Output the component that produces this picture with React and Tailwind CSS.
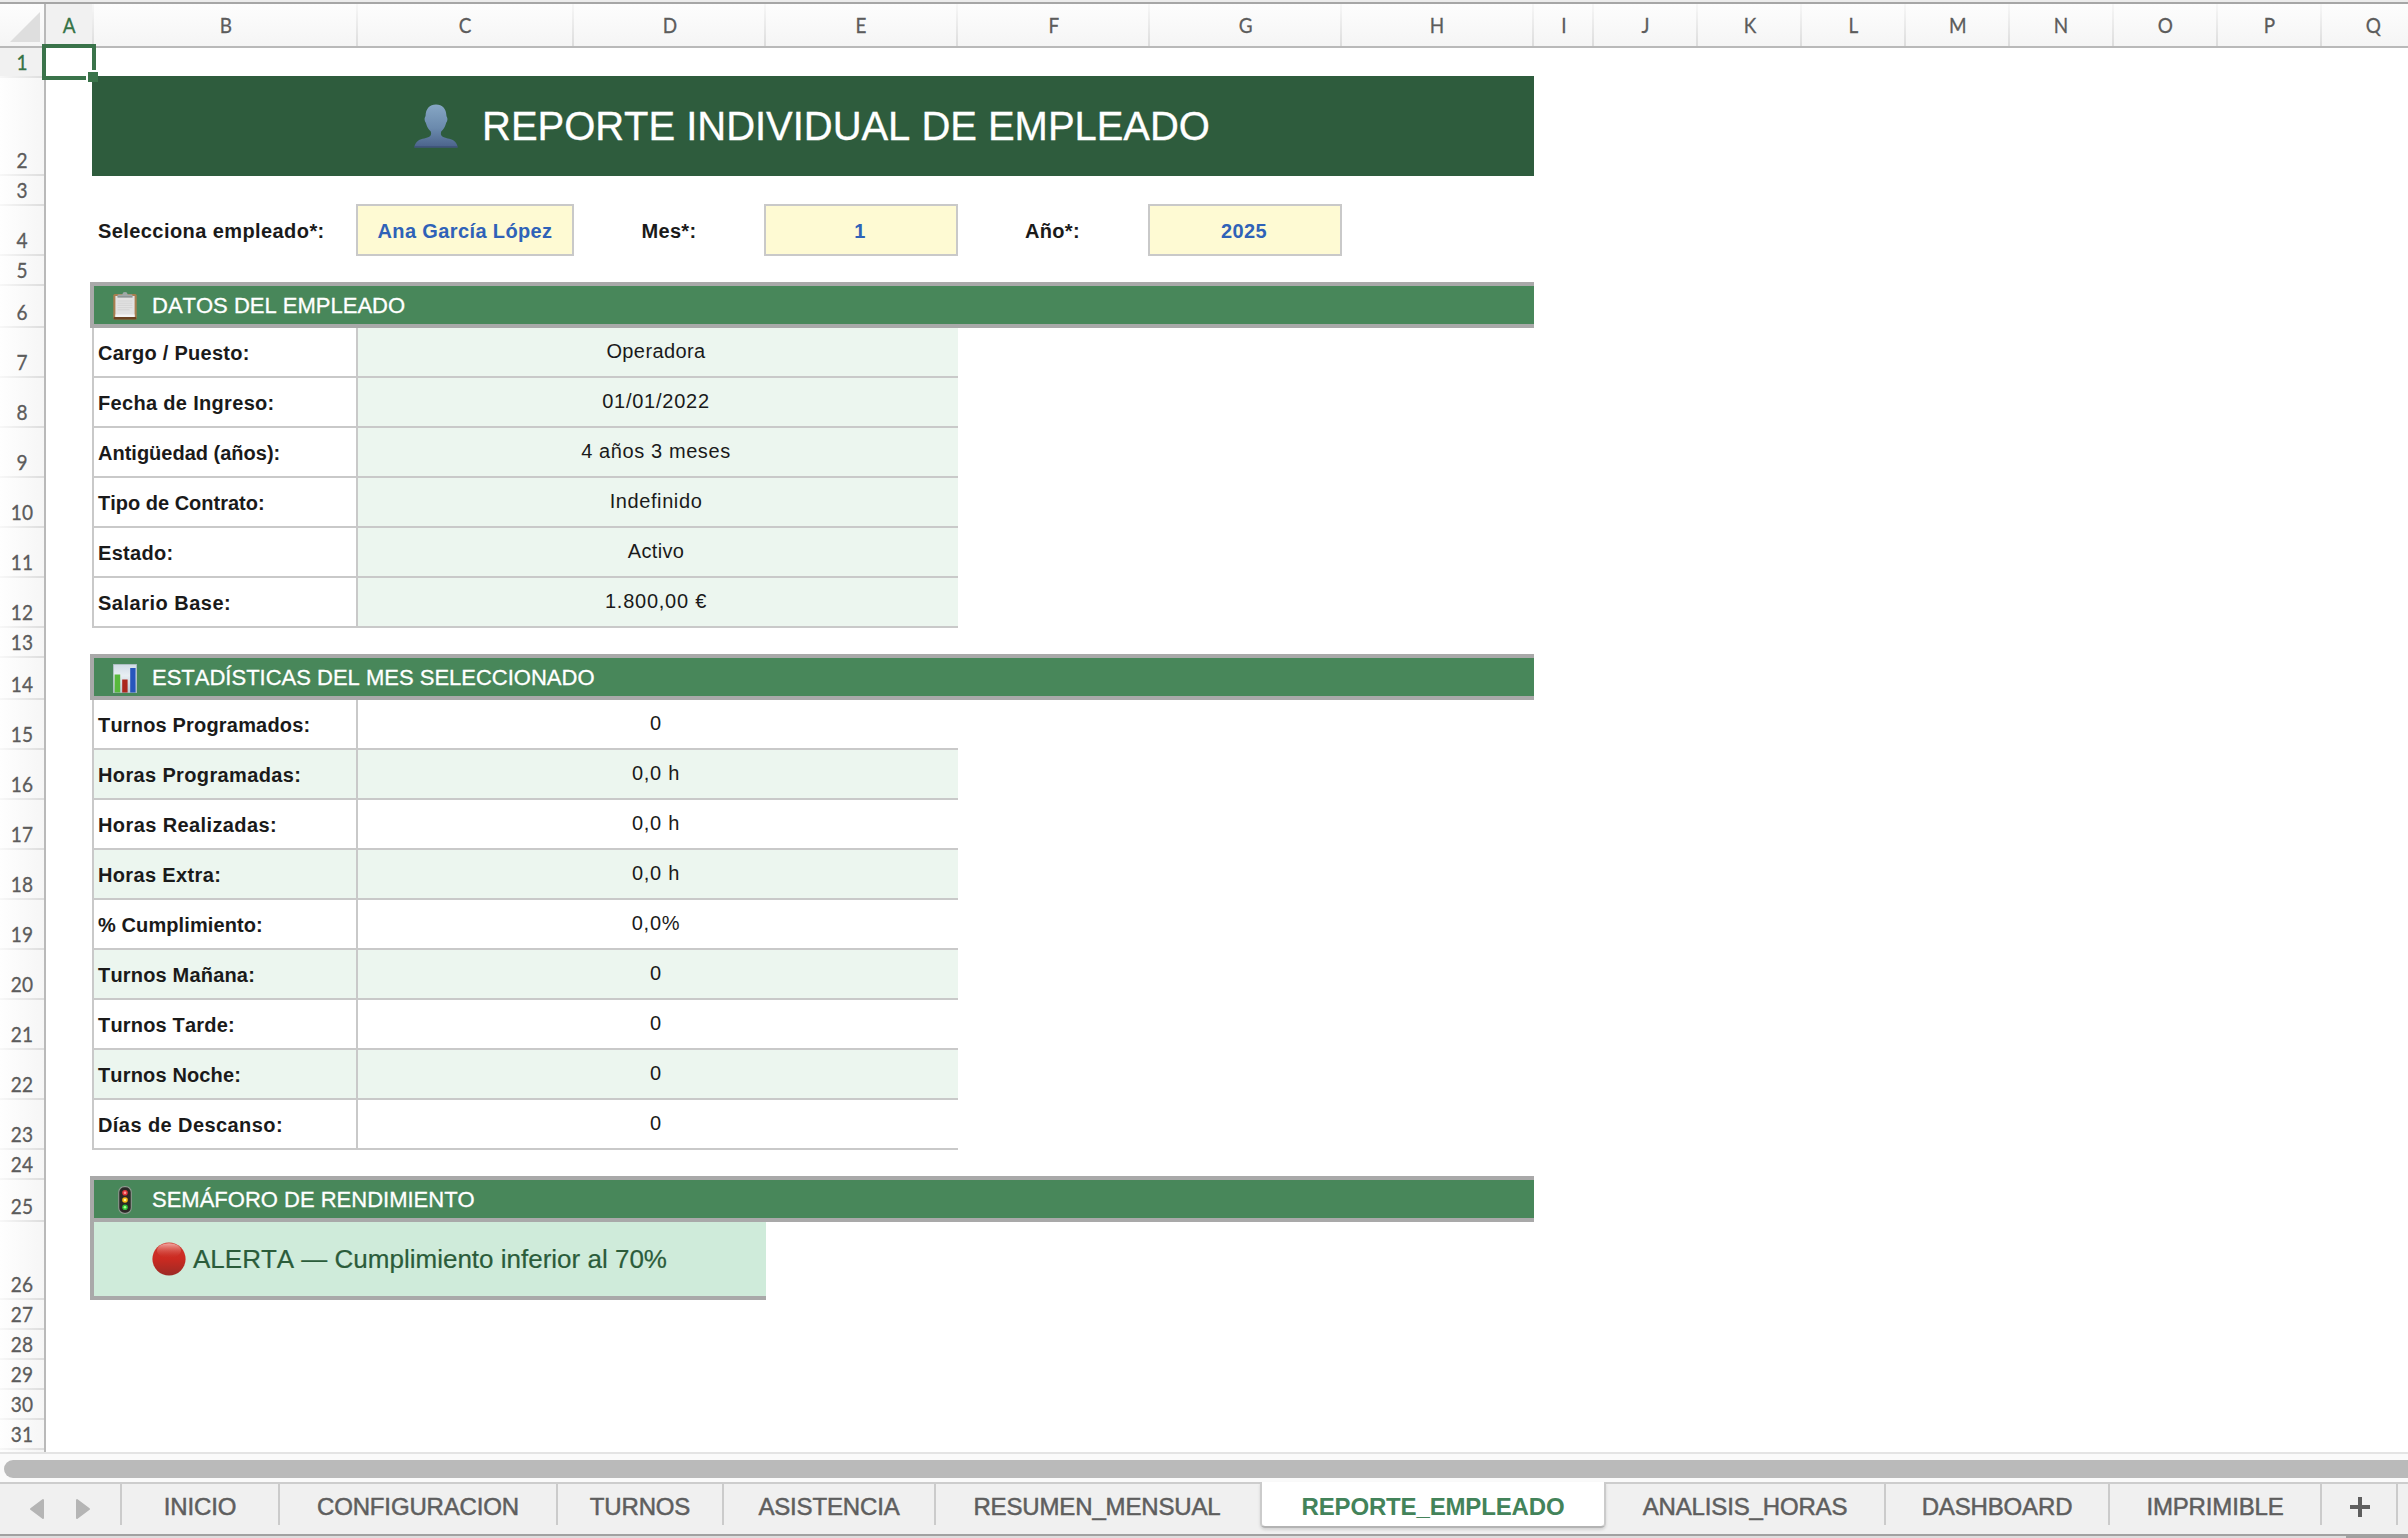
import React from "react";
import clsx from "clsx";

const columns = [
  { name: "A", width: "w-[48px]" },
  { name: "B", width: "w-[264px]" },
  { name: "C", width: "w-[216px]" },
  { name: "D", width: "w-[192px]" },
  { name: "E", width: "w-[192px]" },
  { name: "F", width: "w-[192px]" },
  { name: "G", width: "w-[192px]" },
  { name: "H", width: "w-[192px]" },
  { name: "I", width: "w-[60px]" },
  { name: "J", width: "w-[104px]" },
  { name: "K", width: "w-[104px]" },
  { name: "L", width: "w-[104px]" },
  { name: "M", width: "w-[104px]" },
  { name: "N", width: "w-[104px]" },
  { name: "O", width: "w-[104px]" },
  { name: "P", width: "w-[104px]" },
  { name: "Q", width: "w-[104px]" },
];

// alto de cada fila, 1 a 31
const rowHeights = [
  "h-[30px]", "h-[98px]", "h-[30px]", "h-[50px]", "h-[30px]", "h-[42px]",
  "h-[50px]", "h-[50px]", "h-[50px]", "h-[50px]", "h-[50px]", "h-[50px]",
  "h-[30px]", "h-[42px]",
  "h-[50px]", "h-[50px]", "h-[50px]", "h-[50px]", "h-[50px]", "h-[50px]", "h-[50px]", "h-[50px]", "h-[50px]",
  "h-[30px]", "h-[42px]", "h-[78px]",
  "h-[30px]", "h-[30px]", "h-[30px]", "h-[30px]", "h-[30px]",
];

const employee = [
  { label: "Cargo / Puesto:", value: "Operadora", lt: "tracking-[0.25px]", vt: "tracking-[0.4px]" },
  { label: "Fecha de Ingreso:", value: "01/01/2022", lt: "tracking-[0.32px]", vt: "tracking-[0.75px]" },
  { label: "Antigüedad (años):", value: "4 años 3 meses", lt: "tracking-[0px]", vt: "tracking-[0.6px]" },
  { label: "Tipo de Contrato:", value: "Indefinido", lt: "tracking-[0px]", vt: "tracking-[0.6px]" },
  { label: "Estado:", value: "Activo", lt: "tracking-[0.3px]", vt: "tracking-[0.3px]" },
  { label: "Salario Base:", value: "1.800,00 €", lt: "tracking-[0.5px]", vt: "tracking-[0.75px]" },
];

const stats = [
  { label: "Turnos Programados:", value: "0", lt: "tracking-[0.18px]" },
  { label: "Horas Programadas:", value: "0,0 h", lt: "tracking-[0.36px]" },
  { label: "Horas Realizadas:", value: "0,0 h", lt: "tracking-[0.4px]" },
  { label: "Horas Extra:", value: "0,0 h", lt: "tracking-[0.35px]" },
  { label: "% Cumplimiento:", value: "0,0%", lt: "tracking-[0.1px]" },
  { label: "Turnos Mañana:", value: "0", lt: "tracking-[0.18px]" },
  { label: "Turnos Tarde:", value: "0", lt: "tracking-[0.18px]" },
  { label: "Turnos Noche:", value: "0", lt: "tracking-[0.15px]" },
  { label: "Días de Descanso:", value: "0", lt: "tracking-[0.42px]" },
];

const tabs = [
  { name: "INICIO", width: "w-[158px]" },
  { name: "CONFIGURACION", width: "w-[278px]" },
  { name: "TURNOS", width: "w-[166px]" },
  { name: "ASISTENCIA", width: "w-[212px]" },
  { name: "RESUMEN_MENSUAL", width: "w-[324px]" },
  { name: "REPORTE_EMPLEADO", width: "w-[346px]", active: true },
  { name: "ANALISIS_HORAS", width: "w-[280px]" },
  { name: "DASHBOARD", width: "w-[224px]" },
  { name: "IMPRIMIBLE", width: "w-[212px]" },
];

function PersonIcon() {
  return (
    <svg className="w-[44px] h-[44px] shrink-0" viewBox="0 0 44 44">
      <defs>
        <linearGradient id="person" x1="0" y1="0" x2="0" y2="1">
          <stop offset="0" stopColor="#86a6c4" />
          <stop offset="0.55" stopColor="#6b8aad" />
          <stop offset="1" stopColor="#4a628a" />
        </linearGradient>
      </defs>
      <path
        fill="url(#person)"
        d="M22 0.5C28.5 0.5 32.3 5 32.4 11.5C32.5 12.9 33.6 13.4 33.4 15.6C33.2 17.8 32.2 18.4 31.8 20C31 23.4 29.2 25.6 27.2 27.4C26.6 29.3 26.8 31 28 32.2C31 34.6 36.4 34.2 39.6 36.4C42.2 38.2 43.4 40.6 43.6 43.5H0.4C0.6 40.6 1.8 38.2 4.4 36.4C7.6 34.2 13 34.6 16 32.2C17.2 31 17.4 29.3 16.8 27.4C14.8 25.6 13 23.4 12.2 20C11.8 18.4 10.8 17.8 10.6 15.6C10.4 13.4 11.5 12.9 11.6 11.5C11.7 5 15.5 0.5 22 0.5Z"
      />
      <path d="M0.4 42.9H43.6" stroke="#3d5177" strokeWidth="1.2" />
    </svg>
  );
}

function ClipboardIcon() {
  return (
    <svg className="w-[24px] h-[28px] shrink-0" viewBox="0 0 24 28">
      <rect x="0.3" y="2" width="23.4" height="25.6" rx="1.6" fill="#a87e4f" />
      <rect x="0.6" y="25" width="22.8" height="2.4" rx="1" fill="#6b4423" />
      <rect x="2.4" y="4" width="19.2" height="21" fill="#e2e2e2" />
      <path d="M2.4 22.5h19.2V25H2.4z" fill="#f4f4f4" />
      <path d="M4.6 9h14.8M4.6 11.2h14.8M4.6 13.4h14.8M4.6 15.6h14.8M4.6 17.8h12" stroke="#d3d3d3" strokeWidth="0.9" />
      <path d="M4.5 5.4V3.2Q4.5 2.4 5.5 2.4H9.3Q9.6 0 12 0T14.7 2.4H18.5Q19.5 2.4 19.5 3.2V5.4Z" fill="#9fa9a8" />
      <path d="M4.5 4.9h15" stroke="#7b8281" strokeWidth="0.8" />
    </svg>
  );
}

function ChartIcon() {
  return (
    <svg className="w-[24px] h-[29px] shrink-0" viewBox="0 0 24 29">
      <defs>
        <linearGradient id="chartBg" x1="0" y1="0" x2="0" y2="1">
          <stop offset="0" stopColor="#cfdbe5" />
          <stop offset="0.4" stopColor="#e8eef3" />
          <stop offset="1" stopColor="#b9c6d2" />
        </linearGradient>
      </defs>
      <rect width="24" height="29" fill="url(#chartBg)" />
      <rect x="0.4" y="0.4" width="23.2" height="28.2" fill="none" stroke="#a5b8bb" strokeWidth="0.8" />
      <rect x="1.6" y="10.5" width="5.6" height="18" fill="#58b83c" />
      <rect x="9.2" y="15.5" width="5.4" height="13" fill="#ab261d" />
      <rect x="17.2" y="4" width="5.4" height="24.5" fill="#2756bd" />
    </svg>
  );
}

function TrafficLightIcon() {
  return (
    <svg className="w-[24px] h-[28px] shrink-0" viewBox="0 0 24 28">
      <rect x="5.7" y="0.6" width="12.6" height="26.8" rx="5.6" fill="#2b2826" stroke="#8d9a8f" strokeWidth="1.1" />
      <circle cx="12" cy="6.8" r="2.8" fill="#e0343a" />
      <circle cx="12" cy="6.8" r="1.3" fill="#ff9c98" />
      <circle cx="12" cy="14" r="2.8" fill="#f2b90f" />
      <circle cx="12" cy="14" r="1.3" fill="#fff3a0" />
      <circle cx="12" cy="21.2" r="2.8" fill="#2fc236" />
      <circle cx="12" cy="21.2" r="1.3" fill="#a9ff8f" />
    </svg>
  );
}

function RedCircleIcon() {
  return (
    <svg className="w-[34px] h-[34px] shrink-0" viewBox="0 0 34 34">
      <defs>
        <linearGradient id="red" x1="0" y1="0" x2="0" y2="1">
          <stop offset="0" stopColor="#cf3a30" />
          <stop offset="0.5" stopColor="#cb2a21" />
          <stop offset="1" stopColor="#9c2a25" />
        </linearGradient>
        <linearGradient id="shine" x1="0" y1="0" x2="0" y2="1">
          <stop offset="0" stopColor="#f3aaa4" />
          <stop offset="1" stopColor="#cf3a30" stopOpacity="0" />
        </linearGradient>
      </defs>
      <circle cx="17" cy="17" r="16.6" fill="url(#red)" />
      <ellipse cx="17" cy="8.6" rx="12" ry="7.4" fill="url(#shine)" />
    </svg>
  );
}

function ColumnHeaders() {
  return (
    <div className="flex h-[44px] shrink-0 border-b-2 border-[#b9b9b9] bg-linear-to-b from-[#fdfdfd] to-[#f5f5f5] overflow-hidden">
      <div className="w-[46px] shrink-0 border-r-2 border-[#b9b9b9]">
        <svg className="w-[44px] h-[42px]" viewBox="0 0 44 42">
          <path d="M10 38L40 8V38Z" fill="#dedede" />
        </svg>
      </div>
      {columns.map((c) => (
        <div
          key={c.name}
          className={clsx(
            "flex shrink-0 items-center justify-center border-r-2 pl-px pb-0.5 font-['Lato',sans-serif] text-[21px] leading-none [-webkit-text-stroke:0.3px] [border-image:linear-gradient(to_bottom,#f8f8f8,#dcdcdc)_1]",
            c.width,
            c.name === "A" ? "bg-[#f1f1f1] text-[#367346]" : "text-[#5c5c5c]"
          )}
        >
          <span className="scale-x-90">{c.name}</span>
        </div>
      ))}
    </div>
  );
}

function RowHeaders() {
  return (
    <div className="w-[46px] shrink-0 border-r-2 border-[#b9b9b9] bg-linear-to-r from-[#fefefe] to-[#f6f6f6]">
      {rowHeights.map((h, i) => (
        <div
          key={i}
          className={clsx(
            "flex items-end justify-center border-b-2 pb-1 pr-px font-['Lato',sans-serif] text-[20.5px] leading-none [-webkit-text-stroke:0.3px] [border-image:linear-gradient(to_right,#f8f8f8,#dcdcdc)_1]",
            h,
            i === 0 ? "bg-[#f1f1f1] text-[#367346]" : "text-[#5c5c5c]"
          )}
        >
          <span className="scale-x-93">{i + 1}</span>
        </div>
      ))}
    </div>
  );
}

function SectionBar({ icon, title }) {
  return (
    <div className="mt-[26px] flex h-[46px] w-[1444px] items-center gap-[15px] border-y-4 border-l-4 border-[#a9a9a9] bg-[#48875a] pl-[19px] pt-0.5 text-[22px] leading-none text-white [-webkit-text-stroke:0.3px_white]">
      {icon}
      <span>{title}</span>
    </div>
  );
}

function DataRow({ row, labelShade, valueShade }) {
  return (
    <div className="ml-0.5 flex h-[50px] w-[866px] border-b-2 border-l-2 border-[#c9c9c9] text-[20px] leading-none">
      <div
        className={clsx(
          "flex w-[264px] items-center border-r-2 border-[#c9c9c9] pl-1 pt-0.5 font-bold text-[#1a1a1a]",
          labelShade && "bg-[#ecf6ef]",
          row.lt
        )}
      >
        {row.label}
      </div>
      <div
        className={clsx(
          "flex flex-1 items-center justify-center pb-0.5 pr-1 text-[#1a1a1a]",
          valueShade && "bg-[#ecf6ef]",
          row.vt ?? "tracking-[0.7px]"
        )}
      >
        {row.value}
      </div>
    </div>
  );
}

function Field({ width, children }) {
  return (
    <div
      className={clsx(
        "flex h-[52px] items-center justify-center border-2 border-[#c9c9c9] bg-[#fefad3] pt-0.5 tracking-[0.38px] text-[#2f62b8]",
        width
      )}
    >
      {children}
    </div>
  );
}

function Report() {
  return (
    <div className="flex flex-col pl-[44px] pt-[28px] font-['Liberation_Sans',Arial,sans-serif] [font-kerning:none]">
      <div className="ml-0.5 flex h-[100px] w-[1442px] items-center justify-center gap-[24px] bg-[#2e5c3d] pr-0.5 text-[40px] leading-none tracking-[-0.04px] text-white [-webkit-text-stroke:0.3px_white]">
        <PersonIcon />
        <span>REPORTE INDIVIDUAL DE EMPLEADO</span>
      </div>

      <div className="ml-0.5 mt-[28px] flex items-center text-[20px] leading-none font-bold text-[#1a1a1a]">
        <div className="w-[264px] pl-[6px] pt-0.5 tracking-[0.42px]">Selecciona empleado*:</div>
        <Field width="w-[218px]">Ana García López</Field>
        <div className="w-[190px] pt-0.5 text-center tracking-[0.3px]">Mes*:</div>
        <Field width="w-[194px] pr-0.5">1</Field>
        <div className="w-[190px] pt-0.5 pr-px text-center tracking-[0.3px]">Año*:</div>
        <Field width="w-[194px] pr-0.5">2025</Field>
      </div>

      <SectionBar icon={<ClipboardIcon />} title="DATOS DEL EMPLEADO" />
      {employee.map((row) => (
        <DataRow key={row.label} row={row} valueShade />
      ))}

      <SectionBar icon={<ChartIcon />} title="ESTADÍSTICAS DEL MES SELECCIONADO" />
      {stats.map((row, i) => (
        <DataRow key={row.label} row={row} labelShade={i % 2 === 1} valueShade={i % 2 === 1} />
      ))}

      <SectionBar icon={<TrafficLightIcon />} title="SEMÁFORO DE RENDIMIENTO" />
      <div className="flex h-[78px] w-[676px] items-center gap-[7px] border-b-4 border-l-4 border-[#a9a9a9] bg-[#cfebda] pl-[58px] text-[26px] leading-none text-[#2b5c3a] [-webkit-text-stroke:0.2px]">
        <RedCircleIcon />
        <span>ALERTA — Cumplimiento inferior al 70%</span>
      </div>
    </div>
  );
}

// marco de la celda activa (A1) con su tirador
function CellCursor() {
  return (
    <div className="absolute left-[42px] -top-1 h-[36px] w-[54px] border-4 border-[#3a734a]">
      <div className="absolute -right-[6px] -bottom-[6px] h-[12px] w-[12px] border-t-2 border-l-2 border-white bg-[#3a734a]" />
    </div>
  );
}

function SheetTabs() {
  return (
    <div className="flex h-[50px] shrink-0 items-start bg-[#f0f0f0] font-['Liberation_Sans',Arial,sans-serif] text-[24px] leading-none text-[#5e5e5e]">
      <div className="flex h-[41px] w-[122px] shrink-0 border-r-2 border-[#cbcbcb]">
        <svg className="h-[41px] w-[120px]" viewBox="0 0 120 41" fill="#b5b5b5" stroke="#b5b5b5" strokeWidth="2" strokeLinejoin="round">
          <path d="M31 25L43 16V34Z" />
          <path d="M89 25L77 16V34Z" />
        </svg>
      </div>
      {tabs.map((t) =>
        t.active ? (
          <div
            key={t.name}
            className={clsx(
              "-mt-0.5 flex h-[46px] shrink-0 items-center justify-center rounded-b-[5px] border-b-2 border-x-2 border-[#b3b3b3] border-x-[#cbcbcb] bg-white pt-[5px] font-bold tracking-[-0.15px] text-[#43835a] shadow-[0_2px_3px_rgba(0,0,0,0.12)]",
              t.width
            )}
          >
            {t.name}
          </div>
        ) : (
          <div
            key={t.name}
            className={clsx(
              "flex h-[41px] shrink-0 items-center justify-center border-r-2 pt-[5px] tracking-[-0.15px] [-webkit-text-stroke:0.5px_#5e5e5e]",
              t.name === "RESUMEN_MENSUAL" ? "border-transparent" : "border-[#cbcbcb]",
              t.width
            )}
          >
            {t.name}
          </div>
        )
      )}
      <div className="flex h-[41px] w-[76px] shrink-0 border-r-2 border-[#cbcbcb]">
        <svg className="h-[41px] w-[74px]" viewBox="0 0 74 41" stroke="#5e5e5e" strokeWidth="4">
          <path d="M28 23H48M38 13V33" />
        </svg>
      </div>
    </div>
  );
}

export default function App() {
  return (
    <div className="flex h-[1538px] w-[2408px] flex-col overflow-hidden bg-white">
      <div className="h-1 shrink-0 border-b-2 border-[#a6a6a6] bg-[#ececec]" />
      <ColumnHeaders />

      <div className="relative flex h-[1404px] shrink-0">
        <RowHeaders />
        <Report />
        <CellCursor />
      </div>

      <div className="h-[30px] shrink-0 border-t-2 border-[#e4e4e4] bg-[#fafafa] pl-1 pt-[6px]">
        <div className="h-[18px] rounded-l-full bg-[#bababa]" />
      </div>
      <div className="h-0.5 shrink-0 bg-[#cdcdcd]" />
      <SheetTabs />
      <div className="h-0.5 shrink-0 bg-[#a1a1a1]" />
      <div className="flex h-0.5 shrink-0 bg-[#dedede]">
        <div className="ml-auto w-[62px] bg-[#a1a1a1]" />
      </div>
    </div>
  );
}
